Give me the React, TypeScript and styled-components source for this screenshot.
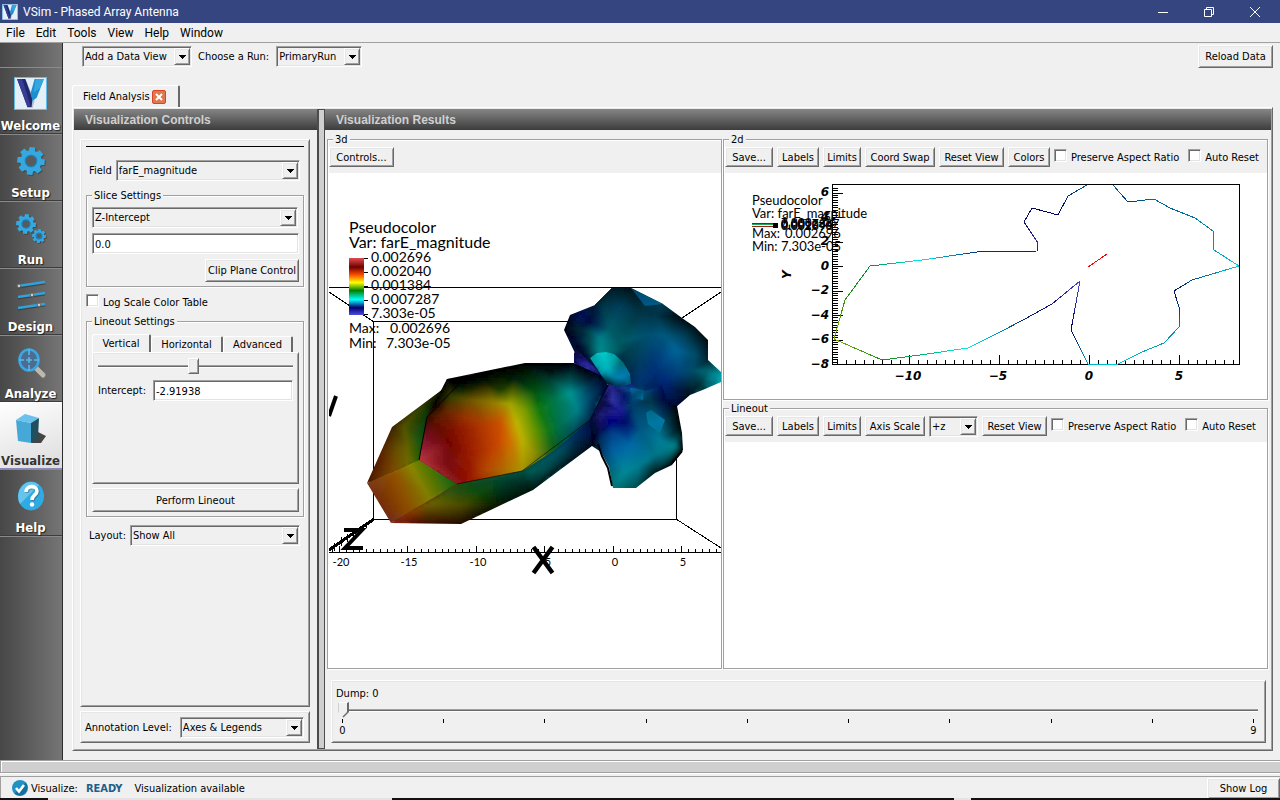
import React, { useId } from "react";
import styled, { createGlobalStyle, css } from "styled-components";

const uiFont = '"DejaVu Sans Condensed", "Noto Sans", sans-serif';
const menuFont = 'Roboto, "Noto Sans", sans-serif';
const plotFont = 'Lato, "Open Sans", sans-serif';

const GlobalStyle = createGlobalStyle`
  * { box-sizing: border-box; }
  body { margin: 0; background: #f0f0f0; color: #000; font: 11px/14px "Noto Sans", sans-serif; }
  button, input, select { font: inherit; color: inherit; margin: 0; border-radius: 0; outline: none; }
`;

const raised = css`
  border: 1px solid;
  border-color: #fff #696969 #696969 #fff;
  box-shadow: inset 1px 1px 0 #e6e6e6, inset -1px -1px 0 #a0a0a0;
`;
const sunken = css`
  border: 1px solid;
  border-color: #a0a0a0 #fff #fff #a0a0a0;
  box-shadow: inset 1px 1px 0 #696969, inset -1px -1px 0 #e3e3e3;
`;

/* ---------- window frame ---------- */
const Window = styled.div`
  display: flex;
  flex-direction: column;
  min-height: 100vh;
  font-family: ${uiFont};
  white-space: nowrap;
`;
const TitleBar = styled.header`
  display: flex;
  align-items: center;
  height: 23px;
  padding: 0 2px;
  background: #35457f;
  color: #fff;
  font: 12px/16px ${menuFont};
`;
const WindowTitle = styled.h1`
  flex: 1;
  margin: 0;
  padding: 1px 0 0 5px;
  font: inherit;
`;
const CaptionButton = styled.button`
  display: grid;
  place-items: center;
  width: 46px;
  height: 20px;
  padding: 0;
  border: 0;
  background: none;
`;
const MenuBar = styled.nav`
  display: flex;
  gap: 11px;
  height: 20px;
  padding: 2px 6px;
  border-bottom: 1px solid #a0a0a0;
  font: 12px/16px ${menuFont};
`;
const MenuItem = styled.button`
  padding: 0;
  border: 0;
  background: none;
`;
const Body = styled.div`
  display: flex;
  flex: 1;
`;

/* ---------- side navigation ---------- */
const Sidebar = styled.nav`
  width: 63px;
  padding-top: 24px;
  border-right: 1px solid #2c2c2c;
  background: linear-gradient(90deg, #474747, #757575);
`;
const NavButton = styled.button<{ $active?: boolean }>`
  display: flex;
  flex-direction: column;
  align-items: center;
  justify-content: space-between;
  width: 100%;
  height: 67px;
  padding: 9px 1px 0 0;
  border: 0;
  border-top: 1px solid ${(p) => (p.$active ? "#fff" : "#8a8a8a")};
  border-bottom: 1px solid ${(p) => (p.$active ? "#8a8ab8" : "#3c3c3c")};
  background: ${(p) => (p.$active ? "linear-gradient(160deg, #fff, #dcdcdc)" : "none")};
  color: ${(p) => (p.$active ? "#333" : "#fff")};
  font: bold 13px/15px ${uiFont};
  text-shadow: ${(p) => (p.$active ? "none" : "1px 1px 1px #222")};
`;
const SidebarEnd = styled.div`
  border-top: 1px solid #8a8a8a;
`;

/* ---------- workspace ---------- */
const Workspace = styled.main`
  display: flex;
  flex: 1;
  flex-direction: column;
  min-width: 0;
  padding: 0 7px 9px 9px;
`;
const RunBar = styled.div`
  display: flex;
  align-items: flex-start;
  height: 42px;
  padding: 2px 0 0 10px;
`;
const RunField = styled.label`
  display: flex;
  align-items: center;
  gap: 7px;
  height: 23px;
  margin-right: 6px;
`;
const Spacer = styled.span`
  flex: 1;
`;
const Button = styled.button<{ $w?: number; $h?: number }>`
  ${raised}
  width: ${(p) => (p.$w ? `${p.$w}px` : "100%")};
  height: ${(p) => p.$h ?? 20}px;
  padding: 1px 0 0;
  background: #f0f0f0;
  line-height: 14px;
`;
const SelectBox = styled.span<{ $w?: number }>`
  ${sunken}
  position: relative;
  display: block;
  height: 21px;
  background: #f0f0f0;
  ${(p) => (p.$w ? `width: ${p.$w}px;` : "flex: 1;")}
`;
const NativeSelect = styled.select`
  appearance: none;
  display: block;
  width: 100%;
  height: 19px;
  padding: 1px 18px 0 2px;
  border: 0;
  background: none;
`;
const SelectArrow = styled.span`
  ${raised}
  position: absolute;
  top: 1px;
  right: 1px;
  bottom: 1px;
  display: grid;
  place-items: center;
  width: 16px;
  background: #f0f0f0;
  pointer-events: none;
`;
const TextInput = styled.input`
  ${sunken}
  width: 100%;
  min-width: 0;
  height: 21px;
  padding: 1px 2px 0;
  background: #fff;
`;
const CheckLabel = styled.label`
  display: flex;
  align-items: flex-start;
  gap: 4px;
  height: 14px;
  line-height: 18px;
`;
const CheckBox = styled.input`
  ${sunken}
  appearance: none;
  width: 13px;
  height: 13px;
  background: #fff;
`;

const TabStrip = styled.div`
  display: flex;
  align-items: flex-end;
`;
const ViewTab = styled.div`
  display: flex;
  align-items: center;
  gap: 2px;
  width: 108px;
  height: 22px;
  padding: 1px 0 0 10px;
  border: solid;
  border-width: 1px 2px 0 1px;
  border-color: #fff #696969 #fff #fff;
  border-radius: 3px 2px 0 0;
`;
const CloseTab = styled.button`
  display: grid;
  place-items: center;
  width: 14px;
  height: 14px;
  padding: 0;
  border: 1px solid #d8442c;
  border-radius: 2px;
  background: #e0774f;
`;
const ViewPane = styled.div`
  ${raised}
  display: grid;
  grid-template-columns: 243px 8px minmax(0, 1fr);
  flex: 1;
  padding: 1px;
`;
const Column = styled.section`
  display: flex;
  flex-direction: column;
  min-width: 0;
`;
const PaneTitle = styled.h2`
  height: 21px;
  margin: 0;
  padding-left: 11px;
  background: linear-gradient(#868686, #3c3c3c);
  color: #d0d0d0;
  font: bold 12px/22px "Liberation Sans", Arial, sans-serif;
`;
const Splitter = styled.div`
  border: solid #4c4c4c;
  border-width: 1px 1px 1px 2px;
  background: #cfcfcf;
`;

/* ---------- controls column ---------- */
const Panel = styled.div`
  ${raised}
  flex: 1;
  margin: 9px 7px 0 6px;
  padding: 6px 5px;
`;
const AnnotationPanel = styled.label`
  ${raised}
  display: flex;
  align-items: center;
  gap: 8px;
  height: 32px;
  margin: 4px 7px 6px 6px;
  padding: 1px 5px 0 4px;
`;
const Rule = styled.hr`
  height: 1px;
  margin: 0 0 13px;
  border: 0;
  background: #000;
`;
const FieldRow = styled.label`
  display: flex;
  align-items: center;
  gap: 4px;
  padding: 0 4px 0 3px;
`;
const Group = styled.fieldset`
  display: flex;
  flex-direction: column;
  min-width: 0;
  margin: 0;
  padding: 0;
  border: 1px solid #a0a0a0;
  box-shadow: 1px 1px 0 #fff, inset 1px 1px 0 #fff;
`;
const GroupTitle = styled.legend`
  height: 14px;
  padding: 0 2px;
  background: #f0f0f0;
  line-height: 15px;
`;
const SliceGroup = styled(Group)`
  gap: 5px;
  margin: 7px 0 7px;
  padding: 5px 4px 4px 5px;
`;
const RightAligned = styled.div`
  display: flex;
  justify-content: flex-end;
`;
const LineoutGroup = styled(Group)`
  gap: 4px;
  margin: 6px 0 8px;
  padding: 6px 4px 4px 5px;
`;
const LineoutTabs = styled.div`
  display: flex;
  align-items: flex-end;
`;
const LineoutTab = styled.button<{ $active?: boolean; $w: number }>`
  width: ${(p) => p.$w}px;
  height: ${(p) => (p.$active ? 18 : 16)}px;
  padding: 1px 0 0;
  border: solid;
  border-width: 1px 2px 0 1px;
  border-color: #fff #696969 #fff #fff;
  border-radius: 3px 2px 0 0;
  background: none;
`;
const LineoutPane = styled.div`
  ${raised}
  height: 132px;
  padding: 5px;
`;
const InterceptField = styled.label`
  display: flex;
  align-items: center;
  gap: 7px;
  margin-top: 6px;
`;
const rangeReset = css`
  appearance: none;
  display: block;
  width: 100%;
  height: 16px;
  background: none;
  &::-webkit-slider-runnable-track {
    height: 3px;
    background: linear-gradient(#a0a0a0 1px, #696969 1px, #696969 2px, #fff 2px);
  }
`;
const InterceptRange = styled.input`
  ${rangeReset}
  &::-webkit-slider-thumb {
    ${raised}
    appearance: none;
    width: 11px;
    height: 16px;
    margin-top: -7px;
    background: #f0f0f0;
  }
`;

/* ---------- results column ---------- */
const Views = styled.div`
  display: grid;
  grid-template-columns: 395fr 545fr;
  gap: 1px;
  flex: 1;
  margin: 2px 3px 0 2px;
`;
const PlotStack = styled.div`
  display: grid;
  grid-template-rows: 1fr 1fr;
  gap: 1px;
  min-width: 0;
`;
const PlotGroup = styled(Group)`
  padding-left: 1px;
  > legend { margin-left: 4px; }
`;
const PlotTools = styled.div`
  display: flex;
  gap: 4px;
  height: 27px;
  padding-top: 1px;
`;
const PlotChecks = styled.div`
  display: flex;
  gap: 9px;
  padding-top: 2px;
`;
const Canvas = styled.div`
  display: grid;
  grid-template: minmax(0, 1fr) / minmax(0, 1fr);
  flex: 1;
  min-height: 220px;
  contain: size;
  background: #fff;
  svg { display: block; width: 100%; height: 100%; }
`;
const DumpPanel = styled.div`
  ${raised}
  height: 63px;
  margin: 11px 5px 6px 6px;
  padding: 6px 7px 0 4px;
`;
const DumpRange = styled.input`
  ${rangeReset}
  width: calc(100% - 2px);
  margin: 1px 0 0 2px;
  &::-webkit-slider-thumb {
    appearance: none;
    width: 11px;
    height: 16px;
    margin-top: -7px;
    border: solid;
    border-width: 1px 2px 0 1px;
    border-color: #fff #696969 #fff #d0d0d0;
    background: linear-gradient(135deg, #f0f0f0 0 72%, #696969 76%);
    clip-path: polygon(0 0, 100% 0, 100% 65%, 50% 100%, 0 65%);
  }
`;
const Ticks = styled.div`
  display: flex;
  justify-content: space-between;
  padding: 1px 0 0 2px;
`;
const Tick = styled.span`
  display: flex;
  flex-direction: column;
  align-items: center;
  gap: 1px;
  width: 9px;
  &::before { content: ""; width: 1px; height: 4px; background: #000; }
`;

/* ---------- footer ---------- */
const LogHandle = styled.div`
  height: 13px;
  border: solid #a0a0a0;
  border-width: 1px 0 1px 1px;
  box-shadow: inset 1px 1px 0 #fff, 0 1px 0 #fff;
  background: #cfcfcf;
`;
const StatusBar = styled.footer`
  display: flex;
  align-items: center;
  height: 22px;
  margin-top: 3px;
  padding: 1px 0 0 11px;
  border: solid #a0a0a0;
  border-width: 1px 0 0 1px;
`;
const StatusLabel = styled.span`
  margin: 1px 8px 0 3px;
`;
const StatusValue = styled.strong`
  margin: 1px 12px 0 0;
  color: #1a5f8c;
`;
const StatusText = styled.span`
  margin-top: 1px;
`;
const DesktopEdge = styled.div`
  height: 2px;
  background: linear-gradient(90deg, #111 0 48px, #e4e4e4 48px 392px, #111 392px 954px, #e4e4e4 954px 971px, #111 971px);
`;

/* ---------- icons ---------- */
const VLogo = ({ size }: { size: number }) => (
  <svg width={size} height={size} viewBox="0 0 32 32" aria-hidden="true">
    <rect x=".5" y=".5" width="31" height="31" fill="#e4eff7" stroke="#62bbe8" />
    <path d="M11 2l9 21-2 7-5 0z" fill="#8fa3b8" opacity=".6" />
    <path d="M3 2h8l7 19-1 8h-4z" fill="#22266e" />
    <path d="M3 2h5l8 26-3 1z" fill="#353d97" />
    <path d="M20 2h9l-7 18-4 3-2-7z" fill="#1d8fd0" />
    <path d="M21 2h8l-4 9-6 4z" fill="#34a6e0" />
  </svg>
);

const gearPath = (cx: number, cy: number, r: number, teeth = 8) => {
  const pts: string[] = [];
  for (let i = 0; i < teeth; i++) {
    const a = (i / teeth) * Math.PI * 2 + 0.1;
    [[-0.3, 0.76], [-0.2, 1], [0.2, 1], [0.3, 0.76]].forEach(([d, k]) =>
      pts.push(`${(cx + Math.cos(a + d) * r * k).toFixed(1)} ${(cy + Math.sin(a + d) * r * k).toFixed(1)}`)
    );
  }
  return `M${pts.join("L")}Z`;
};
const Gear = ({ cx, cy, r }: { cx: number; cy: number; r: number }) => (
  <g>
    <path d={gearPath(cx + 1, cy + 1, r)} fill="#333" opacity=".5" />
    <path d={gearPath(cx, cy, r)} fill="#35a8e0" />
    <circle cx={cx} cy={cy} r={r * 0.4} fill="#5a5a5a" stroke="#1c7fb5" strokeWidth="1.4" />
  </g>
);
const NavSvg = ({ children }: { children: React.ReactNode }) => (
  <svg width="34" height="34" viewBox="0 0 34 34" aria-hidden="true">{children}</svg>
);
const icons: Record<string, React.ReactNode> = {
  Welcome: <VLogo size={33} />,
  Setup: <NavSvg><Gear cx={17} cy={17} r={14} /></NavSvg>,
  Run: <NavSvg><Gear cx={12} cy={13} r={10} /><Gear cx={25} cy={25} r={7} /></NavSvg>,
  Design: (
    <NavSvg>
      {[5, 18, 25].map((k, i) => {
        const y = 6 + i * 11;
        return (
          <g key={k}>
            <path d={`M4 ${y + 3}L31 ${y - 1}`} stroke="#2a2a2a" strokeWidth="3" opacity=".5" />
            <path d={`M4 ${y + 2}L31 ${y - 2}`} stroke="#2fa3db" strokeWidth="2.4" />
            <circle cx={k} cy={y + 2 - (k - 4) * 0.15} r="1.8" fill="#ccc" stroke="#666" />
          </g>
        );
      })}
    </NavSvg>
  ),
  Analyze: (
    <NavSvg>
      <path d="M22 23l7 7" stroke="#bdb8ac" strokeWidth="5" strokeLinecap="round" />
      <ellipse cx="15" cy="15" rx="9.500" ry="10.500" fill="#4c6c90" stroke="#38a7e2" strokeWidth="2.6" />
      <path d="M15 4v6M15 20v6M5 15h5M20 15h5M12 15h6M15 12v6" stroke="#5ab9ea" strokeWidth="1.6" />
    </NavSvg>
  ),
  Visualize: (
    <NavSvg>
      <path d="M17 31l7-11 8 4-5 7z" fill="#444" />
      <path d="M2 8l15 3v20L4 29z" fill="#45a8d6" />
      <path d="M2 8l9-6 14 4-8 5z" fill="#69c1ee" />
      <path d="M17 11l8-5-1 20-7 5z" fill="#20505f" />
    </NavSvg>
  ),
  Help: (
    <NavSvg>
      <ellipse cx="17" cy="17" rx="13" ry="14.5" fill="#2fabe4" />
      <path d="M6 25A13 14.5 0 0 1 25 6z" fill="#66c4ee" />
      <path d="M12 13c0-7 11-7 11-1 0 4-5 4-5 9" fill="none" stroke="#444" strokeWidth="3.6" opacity=".4" transform="translate(1 1)" />
      <path d="M12 13c0-7 11-7 11-1 0 4-5 4-5 9" fill="none" stroke="#fff" strokeWidth="3.6" />
      <circle cx="18" cy="25.500" r="2.200" fill="#fff" />
    </NavSvg>
  ),
};

/* ---------- surface shading ---------- */
type Sample = [number, number, string];
type Pt = [number, number];
type Vertex = { x: number; y: number; c: number[] };

const rgb = (hex: string) => [0, 2, 4].map((i) => parseInt(hex.slice(i, i + 2), 16));

const inCircle = (a: Vertex, b: Vertex, c: Vertex, p: Vertex) => {
  const d = 2 * (a.x * (b.y - c.y) + b.x * (c.y - a.y) + c.x * (a.y - b.y));
  if (!d) return true;
  const [sa, sb, sc] = [a, b, c].map((v) => v.x * v.x + v.y * v.y);
  const ux = (sa * (b.y - c.y) + sb * (c.y - a.y) + sc * (a.y - b.y)) / d;
  const uy = (sa * (c.x - b.x) + sb * (a.x - c.x) + sc * (b.x - a.x)) / d;
  return (p.x - ux) ** 2 + (p.y - uy) ** 2 < (a.x - ux) ** 2 + (a.y - uy) ** 2;
};

/* Delaunay triangulation of the vertices, one insertion at a time. */
const triangulate = (pts: Vertex[]) => {
  const far: Vertex[] = [[-9000, -9000], [9000, -9000], [400, 12000]].map(([x, y]) => ({ x, y, c: [0, 0, 0] }));
  let tris: Vertex[][] = [far];
  pts.forEach((p) => {
    const bad = tris.filter(([a, b, c]) => inCircle(a, b, c, p));
    const edges = bad.flatMap(([a, b, c]) => [[a, b], [b, c], [c, a]]);
    const rim = edges.filter((e) => !edges.some((o) => o !== e && o.includes(e[0]) && o.includes(e[1])));
    tris = tris.filter((t) => !bad.includes(t)).concat(rim.map(([a, b]) => [a, b, p]));
  });
  return tris.filter((t) => !t.some((v) => far.includes(v)));
};

const shade = (tris: Vertex[][], verts: Vertex[], x: number, y: number) => {
  for (const [a, b, c] of tris) {
    const det = (b.y - c.y) * (a.x - c.x) + (c.x - b.x) * (a.y - c.y);
    const u = ((b.y - c.y) * (x - c.x) + (c.x - b.x) * (y - c.y)) / det;
    const v = ((c.y - a.y) * (x - c.x) + (a.x - c.x) * (y - c.y)) / det;
    const w = 1 - u - v;
    if (u >= 0 && v >= 0 && w >= 0) return a.c.map((k, i) => k * u + b.c[i] * v + c.c[i] * w);
  }
  let total = 0;
  const sum = [0, 0, 0];
  verts.forEach((s) => {
    const k = 1 / ((s.x - x) ** 2 + (s.y - y) ** 2 + 1) ** 2;
    total += k;
    s.c.forEach((n, i) => (sum[i] += n * k));
  });
  return sum.map((n) => n / total);
};

/* Fills an outline with colours interpolated between the given samples. */
const Surface = ({ outline, samples, cell = 3 }: { outline: Pt[]; samples: Sample[]; cell?: number }) => {
  const id = useId();
  const xs = outline.map((p) => p[0]);
  const ys = outline.map((p) => p[1]);
  const x0 = Math.min(...xs) - 2 * cell;
  const y0 = Math.min(...ys) - 2 * cell;
  const verts = samples.map(([x, y, c]) => ({ x, y, c: rgb(c) }));
  const tris = triangulate(verts);
  const cells: React.ReactNode[] = [];
  for (let y = y0; y < Math.max(...ys) + 2 * cell; y += cell) {
    for (let x = x0; x < Math.max(...xs) + 2 * cell; x += cell) {
      const c = shade(tris, verts, x + cell / 2, y + cell / 2).map(Math.round);
      cells.push(<rect key={`${x},${y}`} x={x} y={y} width={cell + 1} height={cell + 1} fill={`rgb(${c.join(",")})`} />);
    }
  }
  return (
    <g clipPath={`url(#${id})`}>
      <clipPath id={id}><polygon points={outline.join(" ")} /></clipPath>
      <g filter="url(#smooth)">{cells}</g>
    </g>
  );
};

const surfaces: { outline: Pt[]; samples: Sample[] }[] = [
  { // lower side of the main lobe
    outline: [[391, 523], [457, 484], [522, 471], [590, 420], [600, 385], [612, 384], [610, 440], [592, 446], [533, 490], [461, 524]],
    samples: [[391, 523, "7a2018"], [408, 513, "8a3400"], [425, 524, "3c0c00"], [430, 503, "6c6400"], [461, 524, "200800"], [462, 505, "4a4a00"],
      [457, 486, "185010"], [480, 492, "0c4c08"], [495, 505, "081c00"], [505, 480, "004030"], [533, 490, "001410"], [530, 472, "005850"],
      [545, 470, "004c4c"], [560, 450, "005060"], [575, 455, "001c28"], [575, 435, "003060"], [592, 446, "000818"], [597, 425, "000838"], [600, 405, "101060"], [592, 432, "001048"],
      [608, 384, "000020"], [522, 471, "005040"], [590, 420, "001040"]],
  },
  { // left cap, upper part
    outline: [[367, 483], [392, 427], [443, 389], [447, 379], [470, 378], [460, 384], [427, 417], [419, 460]],
    samples: [[367, 483, "4a1806"], [380, 453, "582000"], [392, 427, "3c2400"], [393, 472, "7a4800"], [397, 450, "685000"], [404, 425, "505000"],
      [410, 463, "6c6c00"], [407, 445, "626000"], [419, 460, "286000"], [421, 438, "105010"], [427, 417, "083808"], [422, 404, "303c00"], [443, 389, "101000"], [435, 405, "000c00"], [447, 379, "000000"], [460, 384, "000000"]],
  },
  { // left cap, lower band
    outline: [[367, 483], [419, 460], [457, 484], [391, 523]],
    samples: [[367, 483, "7a3818"], [380, 503, "742c08"], [391, 523, "702c1c"], [393, 473, "905000"], [408, 513, "8a4800"],
      [410, 464, "888800"], [430, 500, "807c00"], [419, 460, "607c00"], [457, 484, "106010"]],
  },
  { // main lobe face
    outline: [[419, 460], [427, 417], [447, 379], [525, 363], [574, 363], [599, 373], [608, 383], [590, 420], [555, 450], [522, 471], [457, 484]],
    samples: [[419, 460, "b83440"], [427, 438, "780c24"], [457, 484, "901c20"], [437, 450, "8c1c24"], [448, 466, "780c10"], [450, 443, "740400"], [465, 482, "900c00"],
      [427, 417, "300c00"], [434, 423, "5c1000"], [455, 432, "841000"], [470, 455, "981c00"], [445, 412, "642400"], [465, 418, "983000"], [485, 425, "b43c00"], [485, 470, "b04400"],
      [498, 443, "c84800"], [505, 470, "b06c00"], [500, 423, "cc5000"], [510, 440, "d07000"],
      [440, 398, "101400"], [452, 397, "384000"], [470, 400, "6c5400"], [495, 402, "948000"], [510, 404, "a4a400"],
      [517, 424, "c0b400"], [522, 440, "bcb000"], [522, 471, "a89400"], [535, 455, "8c8c00"], [525, 410, "789c00"], [535, 430, "649400"], [555, 450, "085820"],
      [540, 410, "0c7810"], [548, 430, "107818"], [555, 400, "00784c"], [560, 425, "007050"], [570, 393, "009490"], [577, 410, "008088"], [573, 430, "00545c"], [586, 400, "005878"], [590, 420, "002c50"],
      [535, 392, "005410"], [500, 390, "1c3c00"], [470, 388, "102000"], [455, 385, "000400"], [485, 380, "000c00"], [515, 378, "001c08"], [550, 380, "003c30"], [570, 380, "005050"], [590, 386, "003454"], [606, 384, "000830"], [590, 377, "001020"],
      [550, 370, "000c0c"], [490, 372, "000000"], [447, 379, "000000"], [525, 363, "000000"], [574, 363, "000010"], [599, 373, "000018"], [437, 402, "000000"]],
  },
  { // upper right lobe
    outline: [[612, 288], [631, 288], [663, 304], [682, 318], [695, 327], [708, 340], [708, 360], [721, 372], [721, 382], [705, 389], [690, 395], [675, 408],
      [666, 402], [640, 425], [608, 384], [599, 374], [574, 363], [575, 353], [564, 330], [570, 315], [595, 305]],
    samples: [[612, 288, "001c24"], [631, 288, "001418"], [663, 304, "003850"], [682, 318, "000c10"], [655, 315, "003448"], [695, 327, "001014"], [708, 340, "000c10"],
      [708, 360, "002430"], [695, 355, "004c68"], [676, 350, "006498"], [665, 335, "00587c"], [685, 335, "003c54"], [650, 335, "005074"], [640, 310, "003040"], [620, 308, "00405c"], [603, 305, "003448"],
      [580, 314, "00105c"], [590, 322, "000c40"], [595, 305, "001c30"], [570, 315, "000428"], [564, 330, "000010"], [575, 340, "000c30"], [578, 330, "002434"], [588, 330, "003c48"], [590, 343, "004c54"], [583, 352, "000828"],
      [600, 338, "00808a"], [600, 352, "008c8c"], [609, 330, "005c68"], [617, 342, "005c64"],
      [628, 350, "00404c"], [640, 362, "003c60"], [655, 370, "003078"], [665, 382, "002878"], [680, 372, "004478"], [692, 370, "004c68"], [708, 372, "006c78"], [721, 377, "00a0a8"],
      [700, 386, "002c30"], [690, 395, "001018"], [675, 406, "000838"], [655, 393, "001c50"], [640, 382, "003470"], [640, 410, "00485c"], [612, 388, "001030"], [599, 374, "001040"], [708, 381, "007080"]],
  },
  { // sliver on the upper edge
    outline: [[631, 288], [663, 304], [645, 306]],
    samples: [[631, 288, "004468"], [663, 304, "005c84"], [645, 306, "00588c"]],
  },
  { // violet fold at the left
    outline: [[574, 353], [577, 350], [599, 372], [600, 375], [574, 363]],
    samples: [[574, 353, "08083c"], [577, 360, "181868"], [588, 366, "3434b8"], [599, 374, "181868"], [574, 363, "080850"], [588, 360, "101070"]],
  },
  { // lower right lobe
    outline: [[610, 383], [632, 384], [642, 392], [662, 385], [667, 402], [677, 406], [682, 433], [683, 450], [672, 465], [655, 473], [636, 488], [613, 488], [609, 467], [601, 452], [592, 446], [590, 420]],
    samples: [[612, 384, "202080"], [612, 400, "3434a8"], [619, 410, "1c1c98"], [612, 422, "000080"], [625, 422, "000868"], [604, 402, "080840"], [590, 420, "000830"], [600, 415, "1c1c70"], [600, 430, "080850"], [592, 446, "000410"],
      [601, 437, "002c60"], [601, 452, "003868"], [612, 432, "003c88"], [613, 450, "0060a0"], [630, 445, "0068a4"], [609, 467, "00607c"], [613, 488, "007878"], [636, 488, "004c50"], [625, 472, "008898"], [640, 465, "007c90"],
      [640, 430, "005884"], [625, 395, "001860"], [632, 405, "003c68"], [638, 392, "00608c"], [650, 400, "003448"], [662, 385, "001460"], [667, 402, "000838"], [677, 406, "000000"], [655, 418, "005878"],
      [668, 422, "00384c"], [680, 430, "000c10"], [675, 446, "008088"], [660, 440, "007c98"], [655, 455, "007488"], [664, 462, "004850"], [655, 473, "001818"], [672, 465, "000000"],
      [683, 450, "000404"]],
  },
  { // bright facets
    outline: [[646, 413], [651, 410], [665, 420], [660, 433], [648, 424]],
    samples: [[650, 411, "006888"], [664, 420, "0078a4"], [659, 433, "007498"], [646, 415, "0070a0"], [648, 424, "0078a0"]],
  },
  {
    outline: [[630, 388], [644, 390], [643, 400], [632, 397]],
    samples: [[630, 388, "0070a8"], [644, 390, "005070"], [643, 400, "0070a0"], [632, 397, "004470"]],
  },
  { // centre fan
    outline: [[606, 382], [590, 358], [597, 353], [606, 352], [614, 354], [623, 362], [630, 374], [631, 384], [618, 387], [606, 383]],
    samples: [[590, 358, "00a0a0"], [603, 354, "00c8c8"], [608, 368, "00b4bc"], [614, 356, "00a4a8"], [600, 370, "00a4b0"], [622, 362, "006870"], [617, 372, "00789c"],
      [628, 372, "0078a8"], [622, 378, "0080b8"], [612, 376, "0088a8"], [631, 382, "005878"], [617, 386, "003050"], [606, 383, "001020"]],
  },
];

const legend3d = ["0.002696", "0.002040", "0.001384", "0.0007287", "7.303e-05"];

const Plot3D = () => (
  <svg viewBox="329 173 392 495" preserveAspectRatio="xMinYMin meet" role="img" aria-label="3d far field" fontFamily={plotFont}>
    <defs>
      <filter id="smooth" x="-5%" y="-5%" width="110%" height="110%"><feGaussianBlur stdDeviation="1.2" /></filter>
      <linearGradient id="hot" x2="0" y2="1">
        {[[0, "#e04c50"], [0.16, "#700000"], [0.3, "#ff5000"], [0.43, "#ffff00"], [0.57, "#008000"], [0.73, "#00ffff"], [0.87, "#000070"], [1, "#4c4ce0"]].map(([o, c]) => (
          <stop key={o} offset={o} stopColor={c as string} />
        ))}
      </linearGradient>
    </defs>
    <g stroke="#000" fill="none" shapeRendering="crispEdges">
      <path d="M329 287.500H721M373.500 321.500H677M373.500 321V519.500H676.500V321M329 552.500H721" />
      <path d="M329 292L374 322M721 292L676 322M676 519L721 548" />
      <path d="M374 519L329 550" strokeWidth="3" />
      <path d="M334 551v-8M341 546v-9M347 542v-8M353 538v-8M360 534v-8M366 528v-6" />
      {Array.from({ length: 57 }, (_, i) => {
        const x = Math.round(332 + i * 6.85);
        return <path key={i} d={`M${x}.5 553V${i % 10 === 1 ? 546 : 549}`} />;
      })}
    </g>
    <rect x="349" y="258" width="15" height="57" fill="url(#hot)" />
    <path d="M369 483L393 428L445 390L525 365L574 364L606 384L592 444L533 488L461 522L392 521z" fill="#2c2400" />
    {surfaces.map((s, i) => <Surface key={i} {...s} />)}
    <path d="M457 484L522 471L590 420L604 392" fill="none" stroke="#000" strokeOpacity=".6" />
    <path d="M419 460L427 417L460 383" fill="none" stroke="#000" strokeWidth="1" />
    <path d="M598 444L602 456L608 468L612 486M672 463L682 451" fill="none" stroke="#000" strokeWidth="2" />
    <path d="M612 288L595 305" fill="none" stroke="#000" strokeOpacity=".7" />
    <g fontSize="16">
      <text x="349" y="233">Pseudocolor</text>
      <text x="349" y="248">Var: farE_magnitude</text>
    </g>
    <g fontSize="14">
      {legend3d.map((t, i) => (
        <React.Fragment key={t}>
          <path d={`M364 ${258.5 + i * 14}h4`} stroke="#000" />
          <text x="371" y={262 + i * 14}>{t}</text>
        </React.Fragment>
      ))}
      <text x="349" y="333">Max:</text>
      <text x="390" y="333">0.002696</text>
      <text x="349" y="348">Min:</text>
      <text x="386" y="348">7.303e-05</text>
    </g>
    <g fontSize="11" textAnchor="middle">
      {[-20, -15, -10, -5, 0, 5].map((v, i) => <text key={v} x={Math.round(341 + i * 68.4)} y="566">{v}</text>)}
    </g>
    <g fill="none" stroke="#000">
      <path d="M533.500 547L552.500 573M552.500 547L533.500 573" strokeWidth="4.500" />
      <path d="M344 530H362L345 548H363" strokeWidth="4" />
      <path d="M336 396L329 416" strokeWidth="4" />
    </g>
  </svg>
);

const curve: Sample[][] = [
  [[1113, 185, "0068a0"], [1128, 202, "003878"], [1154, 199, "0070a0"], [1170, 208, "006090"], [1195, 218, "0078a0"], [1213, 231, "0088a8"], [1214, 250, "0098b8"],
    [1239, 266, "00d4e4"], [1192, 280, "004888"], [1174, 291, "001060"], [1179, 307, "003070"], [1179, 327, "0088a8"], [1164, 343, "00a0b8"], [1142, 352, "00a8c0"],
    [1118, 364, "00d0d8"], [1088, 364, "00b0c0"], [1071, 330, "000060"], [1080, 281, "4848c8"], [1052, 304, "101070"], [1025, 319, "002070"], [1000, 332, "0090b0"],
    [968, 348, "00f0e8"], [920, 355, "00b070"], [882, 360, "189010"], [834, 339, "80b000"], [845, 300, "309010"], [870, 266, "009040"], [922, 260, "00f0f0"],
    [977, 252, "003080"], [1037, 251, "181880"], [1038, 243, "3030a0"], [1024, 222, "101070"], [1032, 208, "000868"], [1058, 215, "000060"], [1068, 196, "003078"], [1087, 185, "006098"]],
  [[1088, 267, "ff0000"], [1107, 254, "ff0000"]],
];

const mix = (a: string, b: string, t: number) => {
  const A = rgb(a);
  const B = rgb(b);
  return `rgb(${A.map((v, i) => Math.round(v + (B[i] - v) * t)).join(",")})`;
};

const CurveLines = () => (
  <g shapeRendering="crispEdges">
    {curve.flatMap((line, l) =>
      line.slice(1).flatMap(([x2, y2, c2], i) => {
        const [x1, y1, c1] = line[i];
        return Array.from({ length: 5 }, (_, k) => (
          <line key={`${l}-${i}-${k}`} x1={x1 + ((x2 - x1) * k) / 5} y1={y1 + ((y2 - y1) * k) / 5}
            x2={x1 + ((x2 - x1) * (k + 1)) / 5} y2={y1 + ((y2 - y1) * (k + 1)) / 5} stroke={mix(c1, c2, (k + 0.5) / 5)} />
        ));
      })
    )}
  </g>
);

const Plot2D = () => (
  <svg viewBox="725 173 542 226" preserveAspectRatio="xMinYMin meet" role="img" aria-label="2d slice" fontFamily={plotFont}>
    <g fontSize="13">
      <text x="752" y="205">Pseudocolor</text>
      <text x="752" y="218">Var: farE_magnitude</text>
      <text x="752" y="238">Max:</text>
      <text x="785" y="238">0.002696</text>
      <text x="752" y="251">Min:</text>
      <text x="781" y="251">7.303e-05</text>
    </g>
    <g fontSize="12">
      <path d="M752 223.500h22" stroke="#004a80" />
      <path d="M752 224.500h22" stroke="#1ca860" />
      <path d="M752 226.500h22" stroke="#a02010" />
      <rect x="773" y="223" width="5" height="5" />
      {legend3d.map((t, i) => <text key={t} x="781" y={230 - i}>{t}</text>)}
    </g>
    <g stroke="#000" fill="none" shapeRendering="crispEdges">
      <rect x="832.500" y="184.500" width="407" height="180" />
      {Array.from({ length: 73 }, (_, i) => {
        const y = Math.round(364 - i * 2.45);
        return <path key={i} d={`M833 ${y}.5h${i % 10 === 0 ? 10 : 5}`} />;
      })}
      {Array.from({ length: 45 }, (_, i) => {
        const x = Math.round(837 + i * 9);
        return <path key={i} d={`M${x}.5 365v${(i - 8) % 10 === 0 ? -10 : -5}`} />;
      })}
    </g>
    <CurveLines />
    <g fontFamily='"DejaVu Sans", sans-serif' fontWeight="bold" fontStyle="italic" fontSize="12">
      <g textAnchor="end">
        {[6, 4, 2, 0, -2, -4, -6, -8].map((v, i) => (
          <text key={v} x="829" y={Math.round(196 + i * 24.5)}>{String(v).replace("-", "−")}</text>
        ))}
      </g>
      <g textAnchor="middle">
        {[-10, -5, 0, 5].map((v, i) => (
          <text key={v} x={(v < 0 ? 908 : 909) + i * 90} y="380">{String(v).replace("-", "−")}</text>
        ))}
      </g>
      <text transform="translate(791 279) rotate(-90)">Y</text>
    </g>
  </svg>
);

/* ---------- composed controls ---------- */
const Select = ({ value, width, label }: { value: string; width?: number; label?: string }) => (
  <SelectBox $w={width}>
    <NativeSelect aria-label={label} defaultValue={value}>
      <option>{value}</option>
    </NativeSelect>
    <SelectArrow>
      <svg width="7" height="4" viewBox="0 0 7 4" shapeRendering="crispEdges" aria-hidden="true"><path d="M0 0h7L3.500 4z" /></svg>
    </SelectArrow>
  </SelectBox>
);
const Check = ({ label }: { label: string }) => (
  <CheckLabel><CheckBox type="checkbox" />{label}</CheckLabel>
);

const navItems = ["Welcome", "Setup", "Run", "Design", "Analyze", "Visualize", "Help"];

export default function App() {
  return (
    <Window>
      <GlobalStyle />
      <TitleBar>
        <VLogo size={16} />
        <WindowTitle>VSim - Phased Array Antenna</WindowTitle>
        <CaptionButton aria-label="Minimize">
          <svg width="10" height="10"><path d="M0 5.500h10" stroke="#fff" /></svg>
        </CaptionButton>
        <CaptionButton aria-label="Restore">
          <svg width="10" height="10" fill="none" stroke="#fff"><path d="M.5 2.500h7v7h-7zM2.500 2.500v-2h7v7h-2" /></svg>
        </CaptionButton>
        <CaptionButton aria-label="Close">
          <svg width="10" height="10" stroke="#fff"><path d="M0 0l10 10M10 0L0 10" /></svg>
        </CaptionButton>
      </TitleBar>
      <MenuBar>
        {["File", "Edit", "Tools", "View", "Help", "Window"].map((m) => <MenuItem key={m}>{m}</MenuItem>)}
      </MenuBar>
      <Body>
        <Sidebar>
          {navItems.map((n) => (
            <NavButton key={n} $active={n === "Visualize"}>{icons[n]}{n}</NavButton>
          ))}
          <SidebarEnd />
        </Sidebar>
        <Workspace>
          <RunBar>
            <RunField><Select value="Add a Data View" width={110} label="Add a Data View" /></RunField>
            <RunField>Choose a Run:<Select value="PrimaryRun" width={86} /></RunField>
            <Spacer />
            <Button $w={75} $h={23}>Reload Data</Button>
          </RunBar>
          <TabStrip>
            <ViewTab>
              Field Analysis
              <CloseTab aria-label="Close Field Analysis">
                <svg width="8" height="8"><path d="M1 1l6 6M7 1L1 7" stroke="#fff" strokeWidth="2" /></svg>
              </CloseTab>
            </ViewTab>
          </TabStrip>
          <ViewPane>
            <Column>
              <PaneTitle>Visualization Controls</PaneTitle>
              <Panel>
                <Rule />
                <FieldRow>Field<Select value="farE_magnitude" /></FieldRow>
                <SliceGroup>
                  <GroupTitle>Slice Settings</GroupTitle>
                  <Select value="Z-Intercept" width={206} label="Slice type" />
                  <TextInput aria-label="Slice position" defaultValue="0.0" />
                  <RightAligned><Button $w={94} $h={23}>Clip Plane Control</Button></RightAligned>
                </SliceGroup>
                <Check label="Log Scale Color Table" />
                <LineoutGroup>
                  <GroupTitle>Lineout Settings</GroupTitle>
                  <div>
                    <LineoutTabs>
                      <LineoutTab $active $w={59}>Vertical</LineoutTab>
                      <LineoutTab $w={72}>Horizontal</LineoutTab>
                      <LineoutTab $w={70}>Advanced</LineoutTab>
                    </LineoutTabs>
                    <LineoutPane>
                      <InterceptRange type="range" aria-label="Intercept slider" defaultValue={49} />
                      <InterceptField>Intercept:<TextInput defaultValue="-2.91938" /></InterceptField>
                    </LineoutPane>
                  </div>
                  <Button $h={24}>Perform Lineout</Button>
                </LineoutGroup>
                <FieldRow>Layout:<Select value="Show All" /></FieldRow>
              </Panel>
              <AnnotationPanel>Annotation Level:<Select value="Axes & Legends" /></AnnotationPanel>
            </Column>
            <Splitter />
            <Column>
              <PaneTitle>Visualization Results</PaneTitle>
              <Views>
                <PlotGroup>
                  <GroupTitle>3d</GroupTitle>
                  <PlotTools><Button $w={65}>Controls...</Button></PlotTools>
                  <Canvas><Plot3D /></Canvas>
                </PlotGroup>
                <PlotStack>
                  <PlotGroup>
                    <GroupTitle>2d</GroupTitle>
                    <PlotTools>
                      <Button $w={48}>Save...</Button>
                      <Button $w={42}>Labels</Button>
                      <Button $w={38}>Limits</Button>
                      <Button $w={70}>Coord Swap</Button>
                      <Button $w={65}>Reset View</Button>
                      <Button $w={42}>Colors</Button>
                      <PlotChecks>
                        <Check label="Preserve Aspect Ratio" />
                        <Check label="Auto Reset" />
                      </PlotChecks>
                    </PlotTools>
                    <Canvas><Plot2D /></Canvas>
                  </PlotGroup>
                  <PlotGroup>
                    <GroupTitle>Lineout</GroupTitle>
                    <PlotTools>
                      <Button $w={48}>Save...</Button>
                      <Button $w={42}>Labels</Button>
                      <Button $w={38}>Limits</Button>
                      <Button $w={60}>Axis Scale</Button>
                      <Select value="+z" width={49} label="Lineout axis" />
                      <Button $w={65}>Reset View</Button>
                      <PlotChecks>
                        <Check label="Preserve Aspect Ratio" />
                        <Check label="Auto Reset" />
                      </PlotChecks>
                    </PlotTools>
                    <Canvas />
                  </PlotGroup>
                </PlotStack>
              </Views>
              <DumpPanel>
                <label htmlFor="dump">Dump: 0</label>
                <DumpRange id="dump" type="range" min={0} max={9} defaultValue={0} />
                <Ticks>
                  {Array.from({ length: 10 }, (_, i) => <Tick key={i}>{i === 0 || i === 9 ? i : null}</Tick>)}
                </Ticks>
              </DumpPanel>
            </Column>
          </ViewPane>
        </Workspace>
      </Body>
      <LogHandle />
      <StatusBar>
        <svg width="16" height="16" viewBox="0 0 16 16" aria-hidden="true">
          <circle cx="8" cy="8" r="8" fill="#2191c4" />
          <path d="M2.500 13.700A8 8 0 0 0 13.700 2.400z" fill="#17709c" />
          <path d="M4 8l3 3.500L12 5" fill="none" stroke="#fff" strokeWidth="2.600" />
        </svg>
        <StatusLabel>Visualize:</StatusLabel>
        <StatusValue>READY</StatusValue>
        <StatusText>Visualization available</StatusText>
        <Spacer />
        <Button $w={73} $h={21}>Show Log</Button>
      </StatusBar>
      <DesktopEdge />
    </Window>
  );
}
